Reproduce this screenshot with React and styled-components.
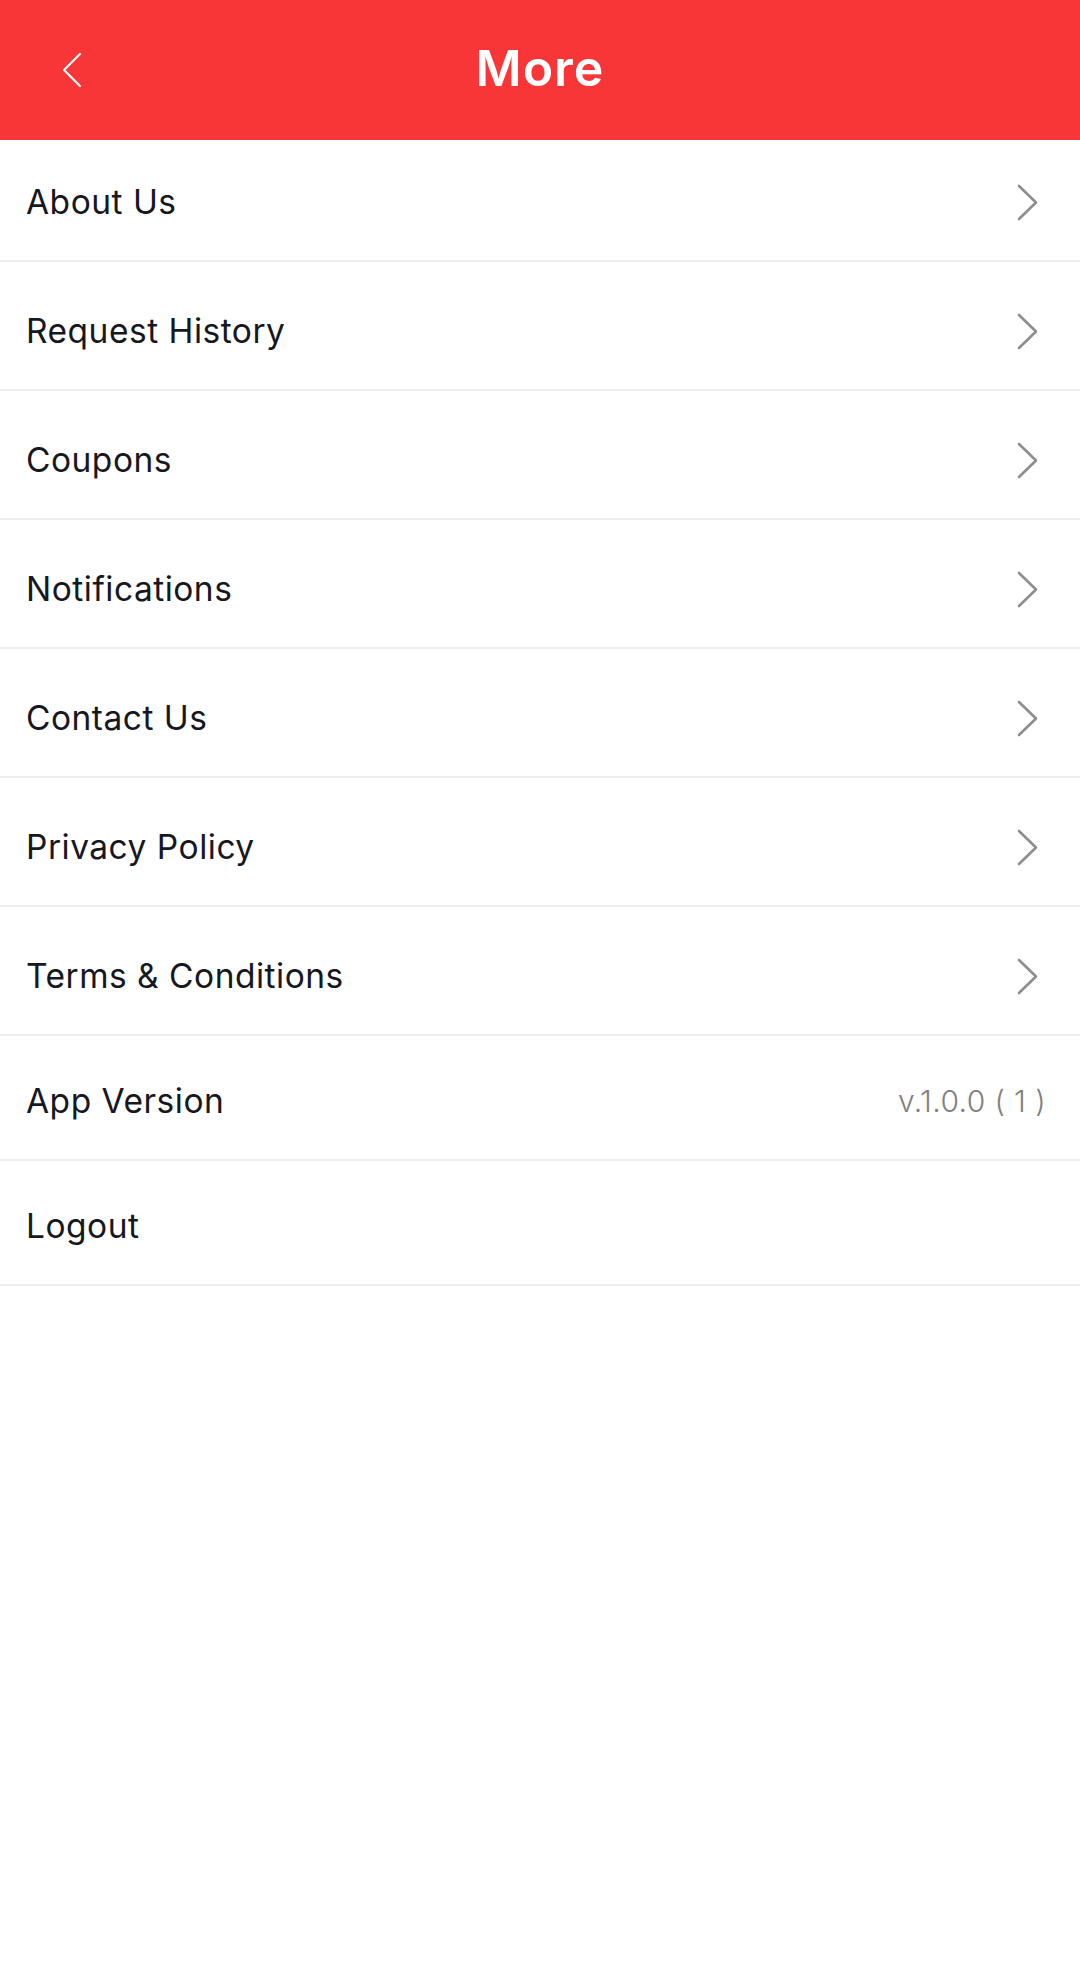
import React from 'react'
import styled, { createGlobalStyle } from 'styled-components'

const GlobalStyle = createGlobalStyle`
    html, body {
        margin: 0;
        padding: 0;
        background: #ffffff;
    }
    body {
        font-family: Inter, "Noto Sans", sans-serif;
        -webkit-font-smoothing: antialiased;
    }
`

const items = [
    { label: 'About Us', height: 120, offset: 4, arrow: true },
    { label: 'Request History', height: 127, offset: 11, arrow: true },
    { label: 'Coupons', height: 127, offset: 11, arrow: true },
    { label: 'Notifications', height: 127, offset: 11, arrow: true },
    { label: 'Contact Us', height: 127, offset: 11, arrow: true },
    { label: 'Privacy Policy', height: 127, offset: 11, arrow: true },
    { label: 'Terms & Conditions', height: 127, offset: 11, arrow: true },
    { label: 'App Version', height: 123, offset: 6, value: 'v.1.0.0 ( 1 )' },
    { label: 'Logout', height: 123, offset: 6 },
]

function ChevronLeft() {
    return (
        <svg width="22" height="36" viewBox="0 0 22 36" fill="none">
            <path d="M19 2 L3 18 L19 34" stroke="#ffffff" strokeWidth="2.2" strokeLinecap="round" strokeLinejoin="round" />
        </svg>
    )
}

function ChevronRight() {
    return (
        <svg width="23" height="37" viewBox="0 0 23 37" fill="none">
            <path d="M3 2 L20 18.5 L3 35" stroke="#8d8d8d" strokeWidth="2.6" strokeLinecap="round" strokeLinejoin="round" />
        </svg>
    )
}

export default function App() {
    return (
        <Screen>
            <GlobalStyle />
            <Header>
                <BackButton type="button" aria-label="Back">
                    <ChevronLeft />
                </BackButton>
                <Title>More</Title>
            </Header>
            <Menu>
                {items.map((item) => (
                    <Row key={item.label} $height={item.height} $offset={item.offset}>
                        <Label>{item.label}</Label>
                        {item.arrow && (
                            <Arrow>
                                <ChevronRight />
                            </Arrow>
                        )}
                        {item.value && <Value>{item.value}</Value>}
                    </Row>
                ))}
            </Menu>
        </Screen>
    )
}

const Screen = styled.div`
    width: 1080px;
    min-height: 1975px;
    background: #ffffff;
`

const Header = styled.header`
    height: 140px;
    background: #f83637;
    display: flex;
    align-items: center;
    justify-content: center;
    position: relative;
`

const BackButton = styled.button`
    position: absolute;
    left: 61px;
    top: 52px;
    padding: 0;
    border: none;
    background: none;
    display: flex;
`

const Title = styled.h1`
    margin: 0 0 4px;
    color: #ffffff;
    font-size: 50px;
    font-weight: 600;
    letter-spacing: 1px;
`

const Menu = styled.ul`
    list-style: none;
    margin: 0;
    padding: 0;
`

const Row = styled.li`
    box-sizing: border-box;
    height: ${(p) => p.$height + 2}px;
    border-bottom: 2px solid #ededed;
    display: flex;
    align-items: center;
    justify-content: space-between;
    padding: ${(p) => p.$offset}px 40px 0 26px;
`

const Label = styled.span`
    color: #16171f;
    font-size: 33.5px;
    font-weight: 400;
    letter-spacing: 0.5px;
`

const Arrow = styled.span`
    display: flex;
    margin-right: 1px;
`

const Value = styled.span`
    color: #808080;
    font-size: 30px;
    font-weight: 300;
    letter-spacing: 0.4px;
    margin-right: -6px;
`
